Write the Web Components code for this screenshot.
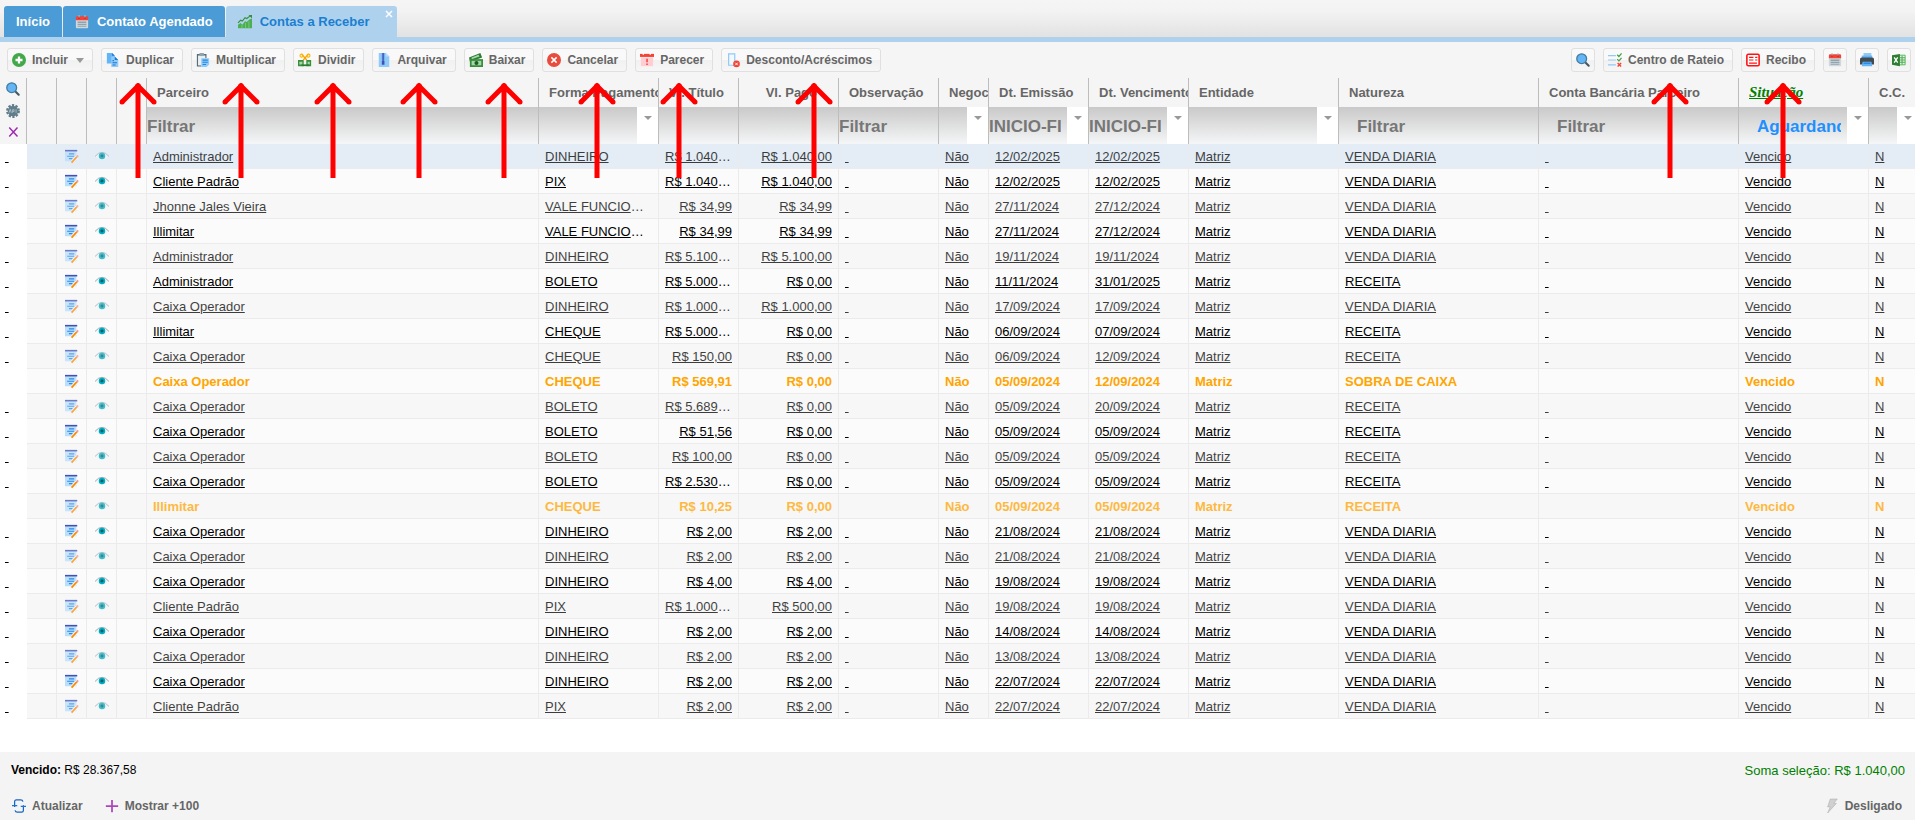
<!DOCTYPE html>
<html lang="pt-BR">
<head>
<meta charset="utf-8">
<title>Contas a Receber</title>
<style>
body{margin:0;font-family:"Liberation Sans",Arial,sans-serif;font-size:13px;background:#fff;color:#000}
</style>
</head>
<body>
<receivables-app></receivables-app>
<script>
const ICONS = {
  calendar:'<path fill="#cfd8dc" d="M1 5h14v9q0 1-1 1H2q-1 0-1-1z"/><path fill="#f44336" d="M1 6V3q0-1.500 1.500-1.500h11Q15 1.500 15 3v3z"/><path fill="#b71c1c" d="M3.500 2h2v2h-2zM10.500 2h2v2h-2z"/><path fill="#b0bec5" d="M4 0h1.200v3H4zM10.800 0H12v3h-1.200z"/><path fill="#90a4ae" d="M3 7.500h10V9H3zM3 10h10v1.300H3zM3 12.300h10v1.200H3z"/>',
  chart:'<path fill="#4caf50" d="M0 15v-4l3-2 2 2 3-4 2 1 3-3 3-1v11z"/><path fill="#81c784" d="M4 11h1v4H4zM8 9h1v6H8zM12 7h1v8h-1z"/><path fill="none" stroke="#388e3c" stroke-width="1.300" d="M0 9l3-3 2 1 3-4 2 1 4-3"/><path fill="#388e3c" d="M12 0h4v4z"/>',
  add:'<circle cx="8" cy="8" r="8" fill="#43a84a"/><path stroke="#fff" stroke-width="2.600" d="M8 4v8M4 8h8"/>',
  copy:'<path fill="#64b5f6" d="M1 0h6l3 3v9H1z"/><path fill="#1976d2" d="M7 0l3 3H7z"/><path fill="#90caf9" d="M6 4h4l4 4v8H6z"/><path fill="#1976d2" d="M10 4l4 4h-4zM7.500 8H9v1.300H7.500zM7.500 10.500h5v1.200h-5zM7.500 13H11v1.200H7.500z"/>',
  paste:'<path fill="#546e7a" d="M1 1h11v5h-1.500V3H2.500v11H6v1.500H1z"/><path fill="#eceff1" d="M2.500 3h8v11h-8z"/><path fill="#90a4ae" d="M4 0h5v3.500H4z"/><path fill="#90caf9" d="M6 6h9v7l-3 3H6z"/><path fill="#1e88e5" d="M7.500 7.500h6v1.300h-6zM7.500 10h6v1.200h-6zM7.500 12.500h4v1.200h-4z"/>',
  split:'<path fill="#388e3c" d="M0 8h6.500v7H0zM9.500 8H15v7H9.500z"/><path fill="#a5d6a7" d="M1.500 10h3.500v3H1.500zM11 10h2.500v3H11z"/><path fill="#2e7d32" d="M4 13h9v2H4z"/><path fill="none" stroke="#ffa000" stroke-width="1.500" d="M4 1l6 7M12 1L6 8"/><circle cx="4" cy="3" r="1.700" fill="none" stroke="#ffb300" stroke-width="1.300"/><circle cx="12" cy="3" r="1.700" fill="none" stroke="#ffb300" stroke-width="1.300"/>',
  zip:'<path fill="#90caf9" d="M2 0h8l4 4v12H2z"/><path fill="#bbdefb" d="M10 0l4 4h-4z"/><path fill="#5c9de5" d="M5.500 0h3v9h-3z"/><path fill="#3f51b5" d="M6.300 0h1.400v9H6.300zM5.500 9h3v4.500h-3z"/>',
  money:'<path fill="#2e7d32" d="M0 5l13-5 2 5-14 5z"/><path fill="#a5d6a7" d="M3 5l8-3 1 2-9 3z"/><path fill="#388e3c" d="M1 7h15v9H1z"/><path fill="#a5d6a7" d="M3 9h11v5H3z"/><circle cx="8.500" cy="11.500" r="2.300" fill="#1b5e20"/>',
  cancel:'<circle cx="8" cy="8" r="8" fill="#e74c3c"/><path stroke="#fff" stroke-width="1.700" d="M5 5l6 6M11 5l-6 6"/>',
  notice:'<path fill="#ffcdd2" d="M1 5h14v10H1z"/><path fill="#f44336" d="M0 1h16v3.500H0z"/><path fill="#fff" d="M3 0h1.500v2H3zM11 0h1.500v2H11z"/><path fill="#f44336" d="M7.200 6.500h1.700v4H7.200zM7.200 12h1.700v1.700H7.200z"/>',
  discount:'<path fill="#f1f8fe" stroke="#90caf9" stroke-width="1.400" d="M3 1h7v13H3z"/><circle cx="12" cy="12.500" r="3.800" fill="#f44336"/><path stroke="#fff" stroke-width="1.100" d="M10.600 11.100l2.800 2.800M13.400 11.100l-2.800 2.800"/>',
  search:'<path stroke="#455a64" stroke-width="2.400" stroke-linecap="round" d="M10.500 10.500l4 4"/><circle cx="6.500" cy="6.500" r="5.600" fill="#64b5f6" stroke="#457b9d" stroke-width="1.500"/>',
  checks:'<path stroke="#90caf9" stroke-width="1.300" d="M0 3h9M0 8h9M0 13.500h9"/><path fill="none" stroke="#43a047" stroke-width="1.400" d="M10.500 2l2 2 3-3.500M10.500 7l2 2 3-3.500"/><path stroke="#f44336" stroke-width="1.600" d="M11 11.500l4 4M15 11.500l-4 4"/>',
  receipt:'<rect x="1" y="1.500" width="14" height="13" rx="1.500" fill="#fff" stroke="#f11" stroke-width="1.800"/><path stroke="#f11" stroke-width="1.300" d="M3.500 5h5M3.500 8h5M3.500 11.500h9M10.500 5h2.500M10.500 8h2.500"/>',
  print:'<path fill="#90caf9" d="M4 0h9v5H4z"/><path fill="#64b5f6" d="M2 3h12v3H2z"/><path fill="#424a52" d="M0 7q0-2 2-2h12q2 0 2 2v6H0z"/><path fill="#64b5f6" d="M3 10h10l1 5H2z"/><path fill="#1976d2" d="M4 11h8v1.200H4z"/>',
  excel:'<path fill="#e8f5e9" stroke="#4caf50" stroke-width="1" d="M8 2.500h7v11H8z"/><path stroke="#4caf50" stroke-width="1.200" d="M11.500 3v10M9 5.500h6M9 8h6M9 10.500h6"/><path fill="#2e7d32" d="M0 2.500L9 1v14l-9-1.500z"/><path stroke="#fff" stroke-width="1.500" d="M2.500 5l4 6M6.500 5l-4 6"/>',
  gear:'<circle cx="8" cy="8" r="6.600" fill="none" stroke="#607d8b" stroke-width="2.600" stroke-dasharray="2.600 1.550"/><circle cx="8" cy="8" r="6" fill="#607d8b"/><path fill="none" stroke="#b0bec5" stroke-width="1" d="M3.500 10l1.300-4 1.300 4M7.500 10V6.500h1.700v2H7.500M11.500 6v4"/>',
  close:'<path stroke="#9c27b0" stroke-width="1.900" d="M3 2l11 12M14 2L3 14"/>',
  edit:'<path fill="#bbdefb" d="M0 2h13v12H0z"/><path fill="#3f51b5" d="M0 1h14v1.800H0z"/><path stroke="#2a8ae6" stroke-width="1.300" d="M4.500 5.500h6M2.500 8.300h8M4.500 11h4"/><path stroke="#fff" stroke-width="3.600" d="M8.500 14.500l5-5.500"/><path stroke="#fb8c00" stroke-width="2" d="M7.500 15.500l6-6.500"/><path stroke="#ef9a9a" stroke-width="2" d="M13.300 9.200L15 7.300"/>',
  eye:'<path fill="#f2f5f6" d="M0 8q8-9 16 0-8 9-16 0"/><path fill="none" stroke="#90a4ae" stroke-width="1" d="M0 8.500q8-9.500 16 0"/><circle cx="8" cy="8" r="3.700" fill="#00acc1"/><circle cx="8" cy="8" r="1.700" fill="#006064"/>',
  refresh:'<path fill="none" stroke="#1565c0" stroke-width="1.400" d="M3 9V3q0-2 2-2h5q2 0 2.500 2M13 7v6q0 2-2 2H6q-2 0-2.500-2"/><path fill="none" stroke="#1976d2" stroke-width="1.400" d="M0 7.500h6M10 8.500h6"/>',
  plus:'<path stroke="#ab47bc" stroke-width="2" d="M8 1v14M1 8h14"/>',
  bolt:'<path fill="#d0d0d0" stroke="#a9a9a9" stroke-width=".6" d="M6 0h8l-4 5h3L3 16l3-7H3z"/>',
};

class UiIcon extends HTMLElement {
  constructor(){ super(); this.attachShadow({mode:'open'}); }
  connectedCallback(){
    this.shadowRoot.innerHTML = `<style>:host{display:inline-block;width:14px;height:14px;flex:none}svg{display:block;width:100%;height:100%;overflow:visible}</style>
      <svg viewBox="0 0 16 16" aria-hidden="true">${ICONS[this.getAttribute('name')]||''}</svg>`;
  }
}
customElements.define('ui-icon', UiIcon);

/* Toolbar button: icon, optional slotted label, optional drop-down caret. */
class ToolButton extends HTMLElement {
  constructor(){ super(); this.attachShadow({mode:'open'}); }
  connectedCallback(){
    const caret = this.hasAttribute('menu') ? '<i></i>' : '';
    const tip = this.getAttribute('tip');
    this.shadowRoot.innerHTML = `<style>
      :host{display:block;flex:none}
      button{display:flex;align-items:center;box-sizing:border-box;height:24px;margin:0;padding:0 8px 0 4px;gap:6px;
        border:1px solid #e0e0e0;border-radius:3px;background:linear-gradient(#f9f9f9 50%,#f1f1f1 50%,#f6f6f6);
        font:bold 12px "Liberation Sans",Arial,sans-serif;color:#666;white-space:nowrap}
      :host([square]) button{padding:0;width:24px;justify-content:center}
      :host([flat]) button{border:0;background:none;padding:0}
      i{border:4px solid transparent;border-top:5px solid #999;border-bottom:0;margin-left:2px}
    </style><button type="button"${tip?` aria-label="${tip}"`:''}><ui-icon name="${this.getAttribute('icon')}"></ui-icon>${this.hasAttribute('square')?'':'<slot></slot>'}${caret}</button>`;
  }
}
customElements.define('tool-button', ToolButton);

class AppTab extends HTMLElement {
  constructor(){ super(); this.attachShadow({mode:'open'}); }
  connectedCallback(){
    const icon = this.getAttribute('icon');
    this.shadowRoot.innerHTML = `<style>
      :host{display:flex;position:relative;height:31px;border-radius:3px 3px 0 0;background:#4a9bd6;color:#fff}
      :host([active]){background:#aed2ee;color:#1a7fd0}
      .tab{all:unset;display:flex;align-items:center;gap:8px;padding:0 12px;font-weight:bold;font-size:13px;white-space:nowrap}
      :host([active]) .tab{padding-right:27px}
      .x{all:unset;position:absolute;top:4px;right:4px;width:8px;height:8px}
      .x svg{display:block}
    </style><button class="tab" role="tab" type="button">${icon?`<ui-icon name="${icon}"></ui-icon>`:''}<slot></slot></button>
    ${this.hasAttribute('active')?'<button class="x" type="button" aria-label="Fechar"><svg width="8" height="8" viewBox="0 0 8 8"><path stroke="#fff" stroke-width="1.500" d="M1 1l6 6M7 1l-6 6"/></svg></button>':''}`;
  }
}
customElements.define('app-tab', AppTab);

class TabStrip extends HTMLElement {
  constructor(){
    super();
    this.attachShadow({mode:'open'}).innerHTML = `<style>
      :host{display:flex;gap:1px;padding:6px 4px 0;background:linear-gradient(#f5f5f5,#f3f3f3 30%,#e2e2e2);border-bottom:5px solid #aed2ee}
    </style><slot></slot>`;
  }
}
customElements.define('tab-strip', TabStrip);

class ToolBar extends HTMLElement {
  constructor(){
    super();
    this.attachShadow({mode:'open'}).innerHTML = `<style>
      :host{display:flex;justify-content:space-between;padding:6px 4px 6px 7px;background:#f5f5f5}
      div{display:flex;gap:8px}
    </style><div><slot></slot></div><div><slot name="end"></slot></div>`;
  }
}
customElements.define('tool-bar', ToolBar);

/* Filter box under a column title. */
class ColumnFilter extends HTMLElement {
  constructor(){ super(); this.attachShadow({mode:'open'}); }
  connectedCallback(){
    const a = n => this.getAttribute(n) || '';
    this.shadowRoot.innerHTML = `<style>
      :host{display:flex;height:37px;background:linear-gradient(#c9c9c9,#f5f6f7)}
      input{flex:1;min-width:0;box-sizing:border-box;margin:0;border:0;padding:2px 6px 0 0;background:none;outline:0;
        font:bold 17px "Liberation Sans",Arial,sans-serif;color:#1e90ff}
      :host([inset]) input{padding-left:18px}
      input::placeholder{color:#777;opacity:1}
      button{flex:none;width:21px;margin:0;border:0;padding:9px 0 0;background:#fff;display:flex;justify-content:center;align-items:flex-start}
      i{border:4px solid transparent;border-top-color:#999;border-bottom:0}
    </style><input type="text" aria-label="Filtrar ${a('label')}" placeholder="${a('hint')}" value="${a('value')}">
    ${this.hasAttribute('drop')?`<button type="button" aria-label="Opções ${a('label')}"><i></i></button>`:''}`;
  }
}
customElements.define('column-filter', ColumnFilter);

const COLUMNS = [
  ['Parceiro',392,'hint="Filtrar"'],['Forma Pagamento',120,'drop'],['Vl. Título',80,'','num'],['Vl. Pago',100,'','num'],
  ['Observação',100,'hint="Filtrar"'],['Negoc',50,'drop'],['Dt. Emissão',100,'hint="INICIO-FIM" drop'],['Dt. Vencimento',100,'hint="INICIO-FIM" drop'],
  ['Entidade',150,'drop'],['Natureza',200,'hint="Filtrar" inset'],['Conta Bancária Parceiro',200,'hint="Filtrar" inset'],
  ['Situação',130,'value="Aguardando" inset drop','state'],['C.C.',50,'drop']
];
/* partner | payment | title value | paid | issued | due | nature ; a leading * marks a highlighted row */
const ROWS = `Administrador|DINHEIRO|1.040,00|1.040,00|12/02/2025|12/02/2025|VENDA DIARIA
Cliente Padrão|PIX|1.040,00|1.040,00|12/02/2025|12/02/2025|VENDA DIARIA
Jhonne Jales Vieira|VALE FUNCIONARIO|34,99|34,99|27/11/2024|27/12/2024|VENDA DIARIA
Illimitar|VALE FUNCIONARIO|34,99|34,99|27/11/2024|27/12/2024|VENDA DIARIA
Administrador|DINHEIRO|5.100,00|5.100,00|19/11/2024|19/11/2024|VENDA DIARIA
Administrador|BOLETO|5.000,00|0,00|11/11/2024|31/01/2025|RECEITA
Caixa Operador|DINHEIRO|1.000,00|1.000,00|17/09/2024|17/09/2024|VENDA DIARIA
Illimitar|CHEQUE|5.000,00|0,00|06/09/2024|07/09/2024|RECEITA
Caixa Operador|CHEQUE|150,00|0,00|06/09/2024|12/09/2024|RECEITA
*Caixa Operador|CHEQUE|569,91|0,00|05/09/2024|12/09/2024|SOBRA DE CAIXA
Caixa Operador|BOLETO|5.689,00|0,00|05/09/2024|20/09/2024|RECEITA
Caixa Operador|BOLETO|51,56|0,00|05/09/2024|05/09/2024|RECEITA
Caixa Operador|BOLETO|100,00|0,00|05/09/2024|05/09/2024|RECEITA
Caixa Operador|BOLETO|2.530,00|0,00|05/09/2024|05/09/2024|RECEITA
*Illimitar|CHEQUE|10,25|0,00|05/09/2024|05/09/2024|RECEITA
Caixa Operador|DINHEIRO|2,00|2,00|21/08/2024|21/08/2024|VENDA DIARIA
Caixa Operador|DINHEIRO|2,00|2,00|21/08/2024|21/08/2024|VENDA DIARIA
Caixa Operador|DINHEIRO|4,00|4,00|19/08/2024|19/08/2024|VENDA DIARIA
Cliente Padrão|PIX|1.000,00|500,00|19/08/2024|19/08/2024|VENDA DIARIA
Caixa Operador|DINHEIRO|2,00|2,00|14/08/2024|14/08/2024|VENDA DIARIA
Caixa Operador|DINHEIRO|2,00|2,00|13/08/2024|13/08/2024|VENDA DIARIA
Caixa Operador|DINHEIRO|2,00|2,00|22/07/2024|22/07/2024|VENDA DIARIA
Cliente Padrão|PIX|2,00|2,00|22/07/2024|22/07/2024|VENDA DIARIA`.split('\n');

class DataGrid extends HTMLElement {
  constructor(){ super(); this.attachShadow({mode:'open'}); }
  connectedCallback(){
    const link = (t,num) => `<td${num?' class="num"':''}><a href="#">${t}</a></td>`;
    const body = ROWS.map((line,i) => {
      const hot = line[0]==='*';
      const [p,f,v,g,e,d,n] = line.replace('*','').split('|');
      const cls = [i%2?'':'soft', hot?'hot':'', i?'':'sel'].join(' ');
      return `<tr class="${cls}"><td class="mark"><a href="#">&nbsp;</a></td><td></td><td class="ico"><ui-icon name="edit"></ui-icon></td><td class="ico"><ui-icon name="eye"></ui-icon></td><td></td>`
        + link(p)+link(f)+link('R$ '+v,1)+link('R$ '+g,1)+link('&nbsp;')+link('Não')+link(e)+link(d)+link('Matriz')+link(n)+link('&nbsp;')+link('Vencido')+link('N')+'</tr>';
    }).join('');
    const head = COLUMNS.map(([t,w,f,c]) => `<th scope="col" class="${c||''}"><span class="title">${t}</span><column-filter label="${t}" ${f}></column-filter></th>`).join('');
    this.shadowRoot.innerHTML = `<style>
      :host{display:block;overflow:hidden;background:#fff}
      table{table-layout:fixed;border-collapse:separate;border-spacing:0;width:1919px}
      th,td{box-sizing:border-box;padding:0;overflow:hidden;white-space:nowrap}
      th{height:66px;background:#f5f5f5;border-right:1px solid #bdbdbd;vertical-align:top;text-align:left;color:#666;font-weight:bold}
      .title{display:block;height:29px;line-height:30px;padding:0 21px 0 10px}
      .num .title{text-align:right}
      .state .title{font:italic bold 15px/29px "Liberation Serif","Times New Roman",serif;color:green;text-decoration:underline}
      .side{display:flex;flex-direction:column;align-items:center;gap:8px;padding-top:4px}
      td{height:25px;padding:2px 6px 0;line-height:22px;text-overflow:ellipsis;background:#fbfbfb;border-right:1px solid #ebebeb;border-bottom:1px solid #ebebeb}
      .soft td{background:#f7f7f7;color:#404040}
      .soft a,.soft ui-icon{opacity:.75}
      tr.sel td{background:#e4edf5}
      a{color:#000;text-decoration:underline}
      .hot a{color:#ffa500;font-weight:bold;text-decoration:none}
      .num{text-align:right}
      td.ico{padding:0 5px 0 8px}
      .ico ui-icon{display:block;margin-bottom:1px}
      tr td.mark{background:#fff;border-color:#fff;padding:2px 5px 0}
      .mark a{opacity:1}
    </style><table><colgroup><col style="width:27px">${'<col style="width:30px">'.repeat(4)}${COLUMNS.map(c=>`<col style="width:${c[1]}px">`).join('')}</colgroup>
    <thead><tr><th><div class="side"><ui-icon name="search"></ui-icon><ui-icon name="gear"></ui-icon><ui-icon name="close" style="height:12px"></ui-icon></div></th><th></th><th></th><th></th><th></th>${head}</tr></thead><tbody>${body}</tbody></table>`;
  }
}
customElements.define('data-grid', DataGrid);

class StatusFooter extends HTMLElement {
  constructor(){
    super();
    this.attachShadow({mode:'open'}).innerHTML = `<style>
      :host{display:block;background:#f4f4f4;font-size:12px}
      div{display:flex;align-items:center;justify-content:space-between}
      .sum{height:36px;padding:0 10px 0 11px}
      .total{color:green;font-size:13px}
      .acts{height:28px;padding:4px 13px 0 12px}
      nav{display:flex;gap:22px}
    </style>
    <div class="sum"><span><b>Vencido:</b> R$ 28.367,58</span><span class="total">Soma seleção: R$ 1.040,00</span></div>
    <div class="acts"><nav><tool-button flat icon="refresh">Atualizar</tool-button><tool-button flat icon="plus">Mostrar +100</tool-button></nav><tool-button flat icon="bolt">Desligado</tool-button></div>`;
  }
}
customElements.define('status-footer', StatusFooter);

/* Red pointer laid over the page; "at" is its centre from the left, "end" from the right. */
class HintArrow extends HTMLElement {
  constructor(){ super(); this.attachShadow({mode:'open'}); }
  connectedCallback(){
    const at = this.getAttribute('at'), end = this.getAttribute('end');
    this.shadowRoot.innerHTML = `<style>
      :host{position:absolute;top:83px;${at?`left:${at-20}px`:`right:${end-20}px`};width:40px;height:95px;pointer-events:none}
      svg{display:block}
    </style><svg width="40" height="95" viewBox="0 0 40 95" aria-hidden="true"><path d="M20 3v92M4 19L20 3l16 16" fill="none" stroke="red" stroke-width="5"/><circle cx="4" cy="19" r="2.500" fill="red"/><circle cx="36" cy="19" r="2.500" fill="red"/><circle cx="20" cy="3" r="2.800" fill="red"/></svg>`;
  }
}
customElements.define('hint-arrow', HintArrow);

class ReceivablesApp extends HTMLElement {
  constructor(){
    super();
    this.attachShadow({mode:'open'}).innerHTML = `<style>
      :host{display:flex;flex-direction:column;position:relative;min-height:100vh;overflow:hidden}
      data-grid{flex:1}
    </style>
    <tab-strip><app-tab>Início</app-tab><app-tab icon="calendar">Contato Agendado</app-tab><app-tab icon="chart" active>Contas a Receber</app-tab></tab-strip>
    <tool-bar>
      <tool-button icon="add" menu>Incluir</tool-button><tool-button icon="copy">Duplicar</tool-button><tool-button icon="paste">Multiplicar</tool-button><tool-button icon="split">Dividir</tool-button><tool-button icon="zip">Arquivar</tool-button><tool-button icon="money">Baixar</tool-button><tool-button icon="cancel">Cancelar</tool-button><tool-button icon="notice">Parecer</tool-button><tool-button icon="discount">Desconto/Acréscimos</tool-button>
      <tool-button slot="end" square icon="search" tip="Pesquisar"></tool-button><tool-button slot="end" icon="checks">Centro de Rateio</tool-button><tool-button slot="end" icon="receipt">Recibo</tool-button><tool-button slot="end" square icon="calendar" tip="Agenda"></tool-button><tool-button slot="end" square icon="print" tip="Imprimir"></tool-button><tool-button slot="end" square icon="excel" tip="Exportar"></tool-button>
    </tool-bar>
    <data-grid></data-grid>
    <status-footer></status-footer>
    ${[138,241,333,419,504,597,679,814].map(x=>`<hint-arrow at="${x}"></hint-arrow>`).join('')}
    <hint-arrow end="245"></hint-arrow><hint-arrow end="132"></hint-arrow>`;
  }
}
customElements.define('receivables-app', ReceivablesApp);
</script>
</body>
</html>
